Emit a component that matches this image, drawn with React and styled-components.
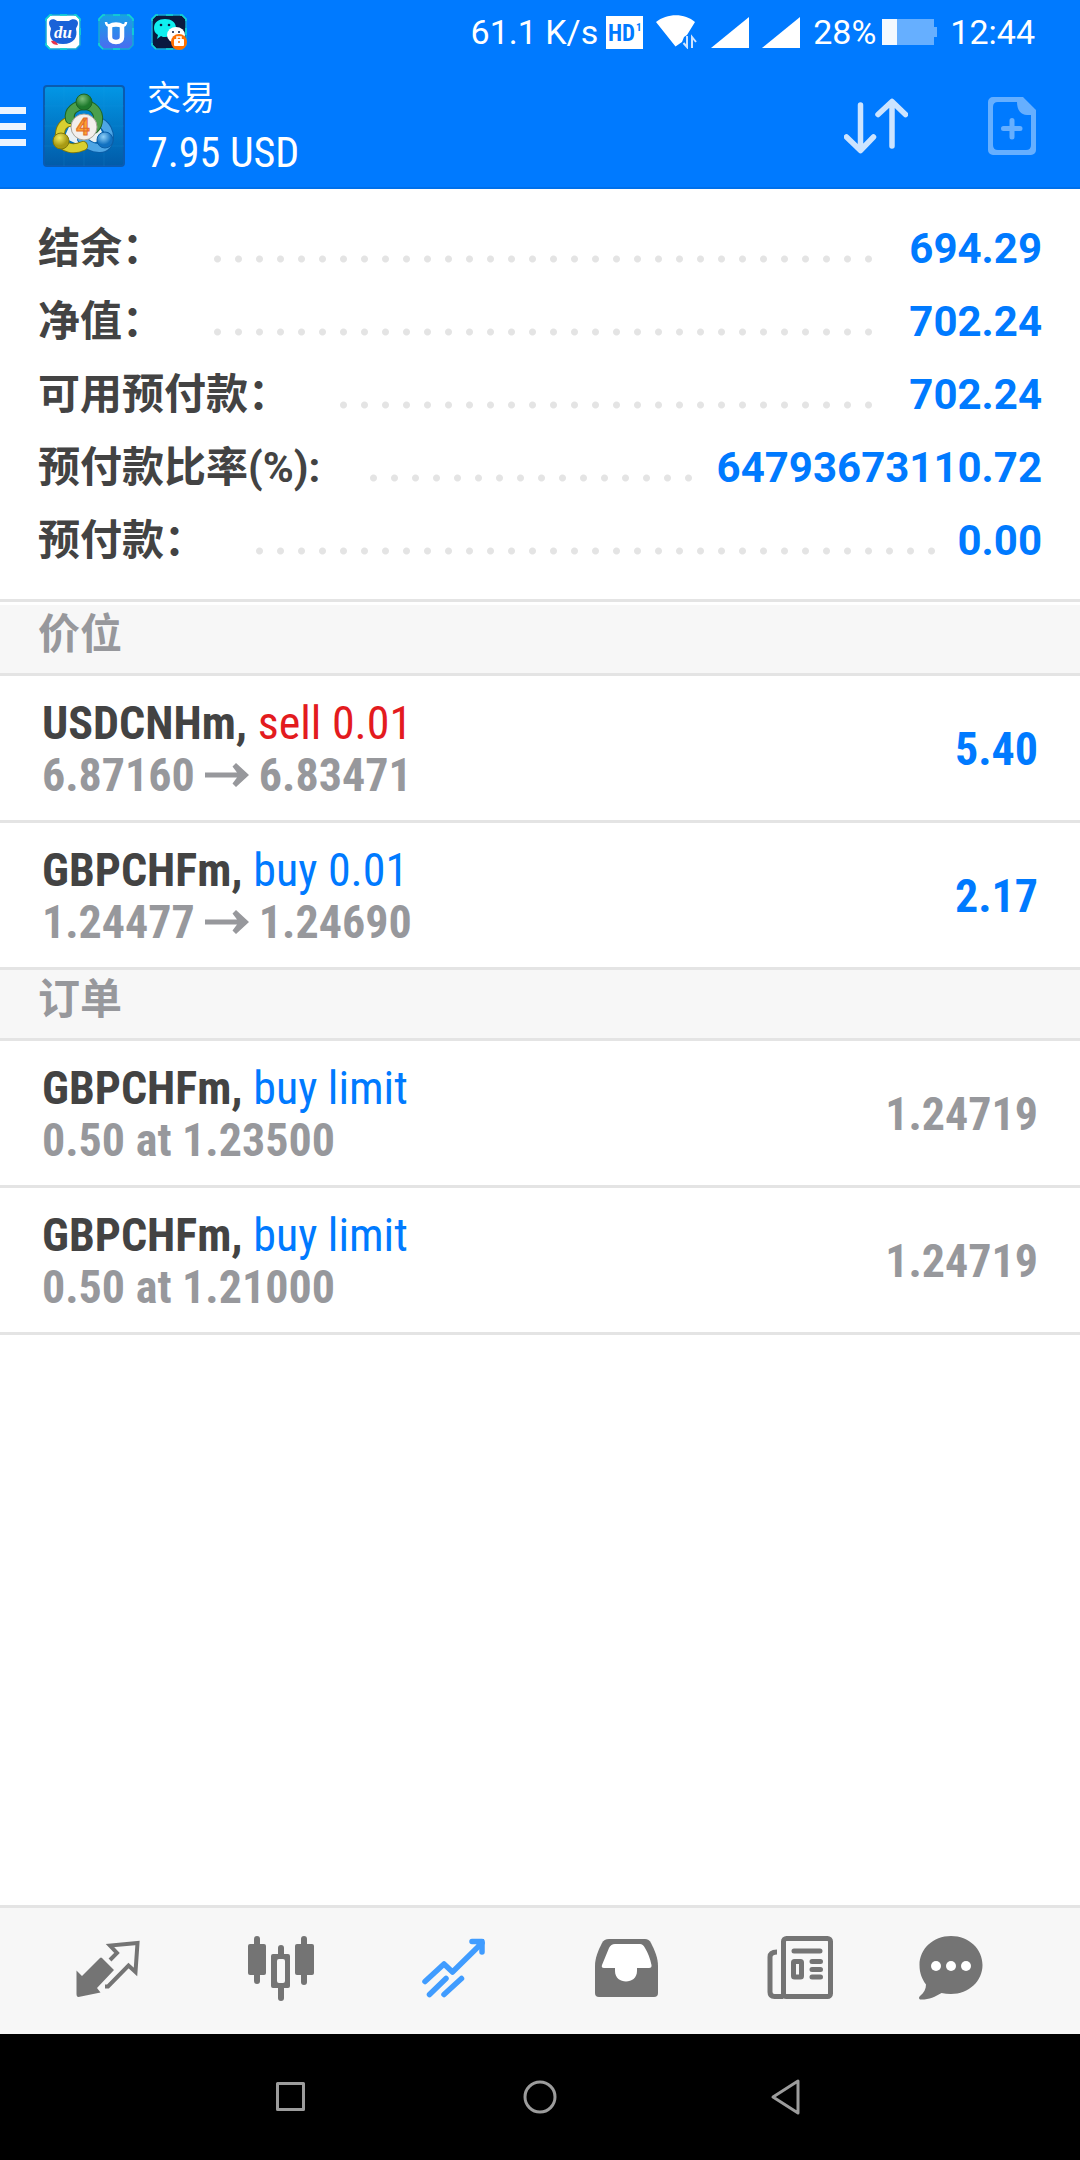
import React from 'react';
import styled, { createGlobalStyle, ThemeProvider } from 'styled-components';

const theme = {
  colors: {
    primary: '#007aff',
    active: '#409cff',
    danger: '#e31b1e',
    darker: '#434343',
    muted: '#97989c',
    icon: '#747474',
    line: '#e4e4e4',
    panel: '#f7f7f7',
    light: '#ffffff'
  },
  fonts: {
    base: "Roboto, 'Noto Sans CJK SC', sans-serif",
    condensed: "'Roboto Condensed', Roboto, 'Noto Sans CJK SC', sans-serif"
  }
};

const GlobalStyle = createGlobalStyle`
  * {
    box-sizing: border-box;
  }

  body {
    margin: 0;
    background-color: ${p => p.theme.colors.light};
    font-family: ${p => p.theme.fonts.base};
  }
`;

const Screen = styled.div`
  display: flex;
  flex-direction: column;
  min-height: 100vh;
`;

const Top = styled.header`
  background-color: ${p => p.theme.colors.primary};
  border-bottom: 2px solid #0070ea;
  color: ${p => p.theme.colors.light};
`;

const StatusBar = styled.div`
  display: flex;
  align-items: center;
  justify-content: space-between;
  height: 64px;
  padding: 0 45px;
  font-size: 34px;
  line-height: 40px;
`;

const StatusGroup = styled.div`
  display: flex;
  align-items: center;
  gap: ${p => p.$gap};
`;

const Toolbar = styled.div`
  display: flex;
  align-items: center;
  height: 123px;
  padding-right: 44px;
`;

const IconButton = styled.button`
  display: flex;
  align-items: center;
  justify-content: center;
  padding: 0;
  border: 0;
  background: none;
  color: inherit;
  cursor: pointer;

  svg {
    display: block;
  }
`;

const Account = styled.div`
  display: flex;
  align-items: center;
  flex-grow: 1;
  gap: 22px;
  margin-left: 17px;
`;

const Title = styled.h1`
  margin: 0;
  font-size: 34px;
  font-weight: 400;
  line-height: 54px;
`;

const Profit = styled.div`
  font-family: ${p => p.theme.fonts.condensed};
  font-size: 42px;
  line-height: 56px;
`;

const Actions = styled.div`
  display: flex;
  align-items: center;
  gap: 80px;
`;

const Summary = styled.dl`
  margin: 0;
  padding: 23px 38px 22px;
  border-bottom: 3px solid ${p => p.theme.colors.line};
`;

const SummaryRow = styled.div`
  display: flex;
  align-items: center;
  height: 73px;
  font-size: 42px;
  font-weight: 700;
  line-height: 60px;
`;

const SummaryLabel = styled.dt`
  color: ${p => p.theme.colors.darker};
`;

const Leader = styled.div`
  flex: 1;
  margin: 20px 12px 0 43px;

  &::before {
    content: '';
    display: block;
    width: round(down, 100%, 21px);
    height: 8px;
    background: radial-gradient(circle, #e4e4e4 3px, transparent 4px) 0 0 / 21px 8px;
  }
`;

const SummaryValue = styled.dd`
  margin: 0;
  color: ${p => p.theme.colors.primary};
`;

const Main = styled.main`
  flex: 1;
`;

const SectionTitle = styled.h2`
  height: 71px;
  margin: ${p => (p.$spaced ? '3px 0 0' : '0')};
  padding: 0 38px;
  border-bottom: 3px solid ${p => p.theme.colors.line};
  background-color: ${p => p.theme.colors.panel};
  color: ${p => p.theme.colors.muted};
  font-size: 42px;
  font-weight: 700;
  line-height: 60px;
`;

const List = styled.ul`
  margin: 0;
  padding: 0;
  list-style: none;
`;

const Item = styled.li`
  display: flex;
  align-items: center;
  justify-content: space-between;
  height: 147px;
  padding: 2px 42px 0;
  border-bottom: 3px solid ${p => p.theme.colors.line};
  color: ${p => p.theme.colors.muted};
  font-family: ${p => p.theme.fonts.condensed};
  font-size: 46px;
  font-weight: 700;
  line-height: 52px;
`;

const Symbol = styled.span`
  color: ${p => p.theme.colors.darker};
`;

const Side = styled.span`
  color: ${p => (p.$sell ? p.theme.colors.danger : p.theme.colors.primary)};
  font-weight: 400;
`;

const Price = styled.div`
  display: flex;
  align-items: center;
  gap: 10px;
`;

const Amount = styled.div`
  color: ${p => (p.$profit ? p.theme.colors.primary : p.theme.colors.muted)};
`;

const TabBar = styled.nav`
  display: grid;
  grid-template-columns: repeat(5, 4fr) 3fr;
  height: 129px;
  padding: 0 64px 0 21px;
  border-top: 3px solid ${p => p.theme.colors.line};
  background-color: ${p => p.theme.colors.panel};
`;

const Tab = styled(IconButton)`
  padding-bottom: 4px;
  color: ${p => (p.$active ? p.theme.colors.active : p.theme.colors.icon)};
`;

const SystemBar = styled.nav`
  display: grid;
  grid-template-columns: repeat(3, 1fr);
  height: 126px;
  padding: 0 168px;
  background-color: #000;
  color: #9c9c9c;
`;

const Tile = ({ children, fill }) => (
  <svg width="36" height="36" viewBox="0 0 36 36" aria-hidden="true">
    <path
      d="M5 1H31L35 5V31L31 35H5L1 31V5Z"
      fill={fill}
      stroke="#16a9d4"
      strokeWidth="1.5"
    />
    <path
      d="M15 1h7M15 35h7M1 7V5L5 1h2M29 1h2l4 4v2M35 14v7M1 29v2l4 4"
      fill="none"
      stroke="#12d4d4"
      strokeWidth="1.6"
    />
    {children}
  </svg>
);

const CloudDiskIcon = () => (
  <Tile fill="#fff">
    <path
      d="M4 9c0-4 5-5 8-2h12c3-3 9-2 9 2 0 3-2 4-2 6 2 8-2 15-13 15S3 23 6 15C6 13 4 12 4 9Z"
      fill="#1a62d8"
    />
    <path d="M6 27c3-1 6 1 7 4-3 0-6-1-7-4Z" fill="#e8334a" />
    <text
      x="18"
      y="24"
      fill="#fff"
      fontFamily="Liberation Serif, serif"
      fontSize="17"
      fontStyle="italic"
      fontWeight="700"
      textAnchor="middle"
    >
      du
    </text>
  </Tile>
);

const BullIcon = () => (
  <Tile fill="url(#bull)">
    <defs>
      <linearGradient id="bull" x1="0" y1="0" x2="0" y2="1">
        <stop offset="0" stopColor="#16a1e8" />
        <stop offset="1" stopColor="#4a6cf0" />
      </linearGradient>
    </defs>
    <path
      d="M8 8c0 3 2 4 5 4M28 8c0 3-2 4-5 4"
      fill="none"
      stroke="#fff"
      strokeWidth="2.5"
    />
    <path
      d="M12 12v11c0 3 2 5 6 5s6-2 6-5V12c-3-2-9-2-12 0Z"
      fill="none"
      stroke="#fff"
      strokeWidth="4.5"
    />
  </Tile>
);

const ChatLockIcon = () => (
  <Tile fill="#0a1a3f">
    <path
      d="M3 14C3 8 8 5 14 5s11 3 11 9-5 9-11 9c-1 0-3 0-4-1l-4 3 1-4c-3-2-4-4-4-7Z"
      fill="#0ff0f0"
    />
    <circle cx="10" cy="11" r="1.3" fill="#0a1a3f" />
    <circle cx="18" cy="11" r="1.3" fill="#0a1a3f" />
    <ellipse cx="25" cy="21" rx="9" ry="8" fill="#fff" />
    <circle cx="22" cy="18" r="1" fill="#0a1a3f" />
    <circle cx="28" cy="18" r="1" fill="#0a1a3f" />
    <circle cx="28" cy="28" r="8" fill="#ff7000" />
    <rect x="23" y="25" width="10" height="7" rx="1" fill="#fff" />
    <path d="M26 25v-2h4v2" fill="none" stroke="#fff" strokeWidth="1.5" />
    <circle cx="28" cy="28" r="1" fill="#ff7000" />
  </Tile>
);

const HdIcon = () => (
  <svg width="37" height="33" viewBox="0 0 37 33" aria-hidden="true">
    <path d="M0 0H37V33H0Z" fill="#fff" />
    <g fill={theme.colors.primary} fontFamily={theme.fonts.condensed} fontWeight="700">
      <text x="2" y="25" fontSize="23">
        HD
      </text>
      <text x="30" y="15" fontSize="11">
        1
      </text>
    </g>
  </svg>
);

const WifiIcon = () => (
  <svg width="42" height="34" viewBox="0 0 42 34" aria-hidden="true">
    <path d="M0 7C11-2 29-2 39 7L31 20l-3 2-2 5-6.500 4.500Z" fill="#fff" />
    <path
      d="M31 21v11l-3.500-4M36 33V22l4 5"
      fill="none"
      stroke="#cfe4ff"
      strokeWidth="2"
    />
  </svg>
);

const SignalIcon = () => (
  <svg width="38" height="31" viewBox="0 0 38 31" aria-hidden="true">
    <path d="M38 0V31H0Z" fill="#fff" />
  </svg>
);

const BatteryIcon = () => (
  <svg width="55" height="26" viewBox="0 0 55 26" aria-hidden="true">
    <path d="M15 0H52V8H55V18H52V26H15Z" fill="#66afff" />
    <path d="M0 0H15V26H0Z" fill="#f4f9ff" />
  </svg>
);

const MenuIcon = () => (
  <svg width="26" height="40" viewBox="0 0 26 40" aria-hidden="true">
    <path d="M0 1H26V8H0ZM0 17H26V24H0ZM0 33H26V40H0Z" fill="#ebf4ff" />
  </svg>
);

const LogoIcon = () => (
  <svg width="82" height="82" viewBox="0 0 82 82" aria-hidden="true">
    <defs>
      <linearGradient id="bg" x1="0" y1="0" x2="0" y2="1">
        <stop offset="0" stopColor="#0297e6" />
        <stop offset="1" stopColor="#015ba8" />
      </linearGradient>
      <radialGradient id="green" cx="0.4" cy="0.3">
        <stop offset="0" stopColor="#7cc07c" />
        <stop offset="1" stopColor="#1e7a2c" />
      </radialGradient>
      <radialGradient id="yellow" cx="0.4" cy="0.3">
        <stop offset="0" stopColor="#f2ea60" />
        <stop offset="1" stopColor="#a89a14" />
      </radialGradient>
      <radialGradient id="blue" cx="0.4" cy="0.3">
        <stop offset="0" stopColor="#8fd0f8" />
        <stop offset="1" stopColor="#1170c0" />
      </radialGradient>
    </defs>
    <rect x="1" y="1" width="80" height="80" rx="3" fill="url(#bg)" stroke="#0a5bb0" strokeWidth="2" />
    <path
      d="M1 21H81M1 41H81M1 61H81M21 1V81M41 1V81M61 1V81"
      stroke="#2aa5ea"
      strokeOpacity="0.15"
    />
    <path d="M30 33h22l10 20-21 9-20-9Z" fill="#e9f1f4" />
    <g fill="none" strokeLinecap="round">
      <path d="M58 38c11 6 11 26-2 25-8 0-13-4-17-9" stroke="#0c5fa8" strokeWidth="10" />
      <path d="M58 38c11 6 11 26-2 25-8 0-13-4-17-9" stroke="#4ea6e6" strokeWidth="8" />
      <path d="M31 37c-11-2-15 7-14 17 3 10 14 11 23 7" stroke="#80780a" strokeWidth="10" />
      <path d="M31 37c-11-2-15 7-14 17 3 10 14 11 23 7" stroke="#d8cf30" strokeWidth="8" />
      <path d="M27 34c-2-8 6-14 14-14 9 0 15 7 14 15 0 4-2 7-4 9" stroke="#1c6425" strokeWidth="10" />
      <path d="M27 34c-2-8 6-14 14-14 9 0 15 7 14 15 0 4-2 7-4 9" stroke="#4b9f4c" strokeWidth="8" />
    </g>
    <circle cx="41" cy="17" r="8" fill="url(#green)" stroke="#1c6425" />
    <circle cx="18" cy="56" r="8" fill="url(#yellow)" stroke="#80780a" />
    <circle cx="62" cy="55" r="8" fill="url(#blue)" stroke="#0c5fa8" />
    <circle cx="41" cy="42" r="13" fill="#f3efec" stroke="#a8a49a" />
    <text
      x="40"
      y="50"
      fill="#ffa32e"
      stroke="#e06c30"
      fontFamily="Roboto, sans-serif"
      fontSize="24"
      fontWeight="700"
      textAnchor="middle"
    >
      4
    </text>
  </svg>
);

const SortIcon = () => (
  <svg width="64" height="60" viewBox="0 0 64 60" aria-hidden="true">
    <path
      d="M16.500 9V54M2.500 41L16.500 54.500L29.500 41M48 50V6M34 18.500L48 5.500L61.500 18.500"
      fill="none"
      stroke="#cce4ff"
      strokeWidth="5.500"
      strokeLinecap="round"
      strokeLinejoin="round"
    />
  </svg>
);

const NewOrderIcon = () => (
  <svg width="48" height="58" viewBox="0 0 48 58" aria-hidden="true">
    <path
      d="M5 0H35L48 13V53a5 5 0 0 1-5 5H5a5 5 0 0 1-5-5V5a5 5 0 0 1 5-5ZM10 5Q5 5 5 10V48Q5 53 10 53H38Q43 53 43 48V18H39C33 18 29 13 29 5Z"
      fill="#66afff"
      fillRule="evenodd"
    />
    <path
      d="M24 23.500V40M15.500 31.500H32"
      stroke="#66afff"
      strokeWidth="5"
      strokeLinecap="round"
    />
  </svg>
);

const ArrowIcon = () => (
  <svg width="44" height="24" viewBox="0 0 44 24" aria-hidden="true">
    <path
      d="M0 9.500H32L27.500 3.500L31 0L44 12L31 24L27.500 20.500L32 14.500H0Z"
      fill="currentColor"
    />
  </svg>
);

const QuotesIcon = () => (
  <svg width="66" height="66" viewBox="0 0 66 66" aria-hidden="true">
    <path
      d="M27 22L39 34L22 52L25.500 56.500L3.500 61Q1.500 61 1.500 58V34.500L7 40L25 22Q26 21 27 22Z"
      fill="currentColor"
    />
    <path
      d="M35 24L42 17L35 9.500L62.500 7L60.500 36L53.500 29.500L33 50.500H30"
      fill="none"
      stroke="currentColor"
      strokeWidth="4"
    />
  </svg>
);

const ChartIcon = () => (
  <svg width="66" height="66" viewBox="0 0 66 66" aria-hidden="true">
    <g fill="currentColor">
      <rect x="0" y="8" width="18" height="31" rx="2" />
      <rect x="6" y="0" width="6" height="48" rx="3" />
      <rect x="47" y="8" width="19" height="31" rx="2" />
      <rect x="53" y="0" width="6" height="49" rx="3" />
      <rect x="30" y="9" width="6" height="12" rx="3" />
      <rect x="30" y="48" width="6" height="17" rx="3" />
      <path
        d="M25 18H40a2 2 0 0 1 2 2V50a2 2 0 0 1-2 2H25a2 2 0 0 1-2-2V20a2 2 0 0 1 2-2ZM31 23a2 2 0 0 0-2 2V45a2 2 0 0 0 2 2H35a2 2 0 0 0 2-2V25a2 2 0 0 0-2-2Z"
        fillRule="evenodd"
      />
    </g>
  </svg>
);

const TradeIcon = () => (
  <svg width="66" height="66" viewBox="0 0 66 66" aria-hidden="true">
    <g fill="none" stroke="currentColor" strokeWidth="5.500">
      <path
        d="M4 45.500L23 28L31.500 36L61 7"
        strokeLinecap="round"
        strokeLinejoin="round"
      />
      <path d="M51 5.500H61V16" strokeLinecap="round" strokeLinejoin="round" />
      <path d="M8.500 58.500L25 42.500M23 58.500L40.500 42.500" strokeLinecap="round" />
    </g>
    <path d="M50 3H63V16Z" fill="currentColor" />
  </svg>
);

const HistoryIcon = () => (
  <svg width="66" height="66" viewBox="0 0 66 66" aria-hidden="true">
    <path
      d="M15 3H51Q55 3 57 7C61 15 64 22 64 30V57Q64 61 60 61H5Q1 61 1 57V30C1 22 4 15 8 7Q10 3 15 3Z"
      fill="currentColor"
    />
    <path
      d="M21 8Q17 8 15 12L8 29Q7 32 10 32H21V35C21 49 43 49 43 35V32H55Q58 32 57.500 29C56 22 54 17 51 12Q49 8 46 8Z"
      fill="#fff"
    />
  </svg>
);

const NewsIcon = () => (
  <svg width="66" height="66" viewBox="0 0 66 66" aria-hidden="true">
    <g fill="none" stroke="currentColor" strokeWidth="5">
      <rect x="16.500" y="2.500" width="47" height="58" rx="3" />
      <path d="M10 16C6 16 3 17 3 21V56Q3 60.500 7.500 60.500H16.500" />
      <path
        d="M27 15H53M45 25.500H53.500M45 33.500H53.500M45 41H53.500"
        strokeLinecap="round"
      />
      <rect x="26.500" y="25.500" width="8" height="15.500" rx="1" />
    </g>
  </svg>
);

const MessagesIcon = () => (
  <svg width="66" height="66" viewBox="0 0 66 66" aria-hidden="true">
    <path
      d="M33 0C51 0 64.500 13 64.500 29S51 58 33 58Q28 58 23.500 57C17 61 10 64 2 63.500Q0 62 2 60C6 57 8 53 8 48.500C4 43 1.500 37 1.500 29C1.500 13 15 0 33 0Z"
      fill="currentColor"
    />
    <g fill="#fff">
      <circle cx="18" cy="30" r="5" />
      <circle cx="33" cy="30" r="5" />
      <circle cx="48" cy="30" r="5" />
    </g>
  </svg>
);

const SystemIcon = ({ children }) => (
  <svg width="40" height="40" viewBox="0 0 40 40" aria-hidden="true">
    <g fill="none" stroke="currentColor" strokeWidth="3" strokeLinejoin="round">
      {children}
    </g>
  </svg>
);

const summary = [
  { label: '结余：', value: '694.29' },
  { label: '净值：', value: '702.24' },
  { label: '可用预付款：', value: '702.24' },
  { label: '预付款比率(%):', value: '64793673110.72' },
  { label: '预付款：', value: '0.00' }
];

const positions = [
  { symbol: 'USDCNHm', side: 'sell', lots: '0.01', open: '6.87160', current: '6.83471', profit: '5.40' },
  { symbol: 'GBPCHFm', side: 'buy', lots: '0.01', open: '1.24477', current: '1.24690', profit: '2.17' }
];

const orders = [
  { id: 1, symbol: 'GBPCHFm', type: 'buy limit', details: '0.50 at 1.23500', price: '1.24719' },
  { id: 2, symbol: 'GBPCHFm', type: 'buy limit', details: '0.50 at 1.21000', price: '1.24719' }
];

const tabs = [
  { id: 'quotes', label: '行情', Icon: QuotesIcon },
  { id: 'chart', label: '图表', Icon: ChartIcon },
  { id: 'trade', label: '交易', Icon: TradeIcon },
  { id: 'history', label: '历史', Icon: HistoryIcon },
  { id: 'news', label: '新闻', Icon: NewsIcon },
  { id: 'messages', label: '消息', Icon: MessagesIcon }
];

function AppHeader() {
  return (
    <Top>
      <StatusBar>
        <StatusGroup $gap="17px">
          <CloudDiskIcon />
          <BullIcon />
          <ChatLockIcon />
        </StatusGroup>
        <StatusGroup $gap="13px">
          <StatusGroup $gap="8px">
            <span>61.1 K/s</span>
            <HdIcon />
          </StatusGroup>
          <WifiIcon />
          <SignalIcon />
          <SignalIcon />
          <StatusGroup $gap="6px">
            <span>28%</span>
            <BatteryIcon />
          </StatusGroup>
          <span>12:44</span>
        </StatusGroup>
      </StatusBar>
      <Toolbar>
        <IconButton type="button" aria-label="菜单">
          <MenuIcon />
        </IconButton>
        <Account>
          <LogoIcon />
          <div>
            <Title>交易</Title>
            <Profit>7.95 USD</Profit>
          </div>
        </Account>
        <Actions>
          <IconButton type="button" aria-label="排序">
            <SortIcon />
          </IconButton>
          <IconButton type="button" aria-label="新订单">
            <NewOrderIcon />
          </IconButton>
        </Actions>
      </Toolbar>
    </Top>
  );
}

function App() {
  const [activeTab, setActiveTab] = React.useState('trade');

  return (
    <ThemeProvider theme={theme}>
      <GlobalStyle />
      <Screen lang="zh-CN">
        <AppHeader />
        <Main>
          <Summary>
            {summary.map(({ label, value }) => (
              <SummaryRow key={label}>
                <SummaryLabel>{label}</SummaryLabel>
                <Leader />
                <SummaryValue>{value}</SummaryValue>
              </SummaryRow>
            ))}
          </Summary>

          <SectionTitle $spaced>价位</SectionTitle>
          <List>
            {positions.map(p => (
              <Item key={p.symbol}>
                <div>
                  <Symbol>{p.symbol},</Symbol>{' '}
                  <Side $sell={p.side === 'sell'}>
                    {p.side} {p.lots}
                  </Side>
                  <Price>
                    {p.open}
                    <ArrowIcon />
                    {p.current}
                  </Price>
                </div>
                <Amount $profit>{p.profit}</Amount>
              </Item>
            ))}
          </List>

          <SectionTitle>订单</SectionTitle>
          <List>
            {orders.map(o => (
              <Item key={o.id}>
                <div>
                  <Symbol>{o.symbol},</Symbol> <Side>{o.type}</Side>
                  <div>{o.details}</div>
                </div>
                <Amount>{o.price}</Amount>
              </Item>
            ))}
          </List>
        </Main>

        <TabBar>
          {tabs.map(({ id, label, Icon }) => (
            <Tab
              key={id}
              type="button"
              aria-label={label}
              $active={id === activeTab}
              onClick={() => setActiveTab(id)}
            >
              <Icon />
            </Tab>
          ))}
        </TabBar>
        <SystemBar>
          <IconButton type="button" aria-label="最近任务">
            <SystemIcon>
              <rect x="5.500" y="6.500" width="26" height="26" />
            </SystemIcon>
          </IconButton>
          <IconButton type="button" aria-label="主屏幕">
            <SystemIcon>
              <circle cx="20" cy="20" r="15" />
            </SystemIcon>
          </IconButton>
          <IconButton type="button" aria-label="返回">
            <SystemIcon>
              <path d="M30 4V36L5 20Z" />
            </SystemIcon>
          </IconButton>
        </SystemBar>
      </Screen>
    </ThemeProvider>
  );
}

export default App;
